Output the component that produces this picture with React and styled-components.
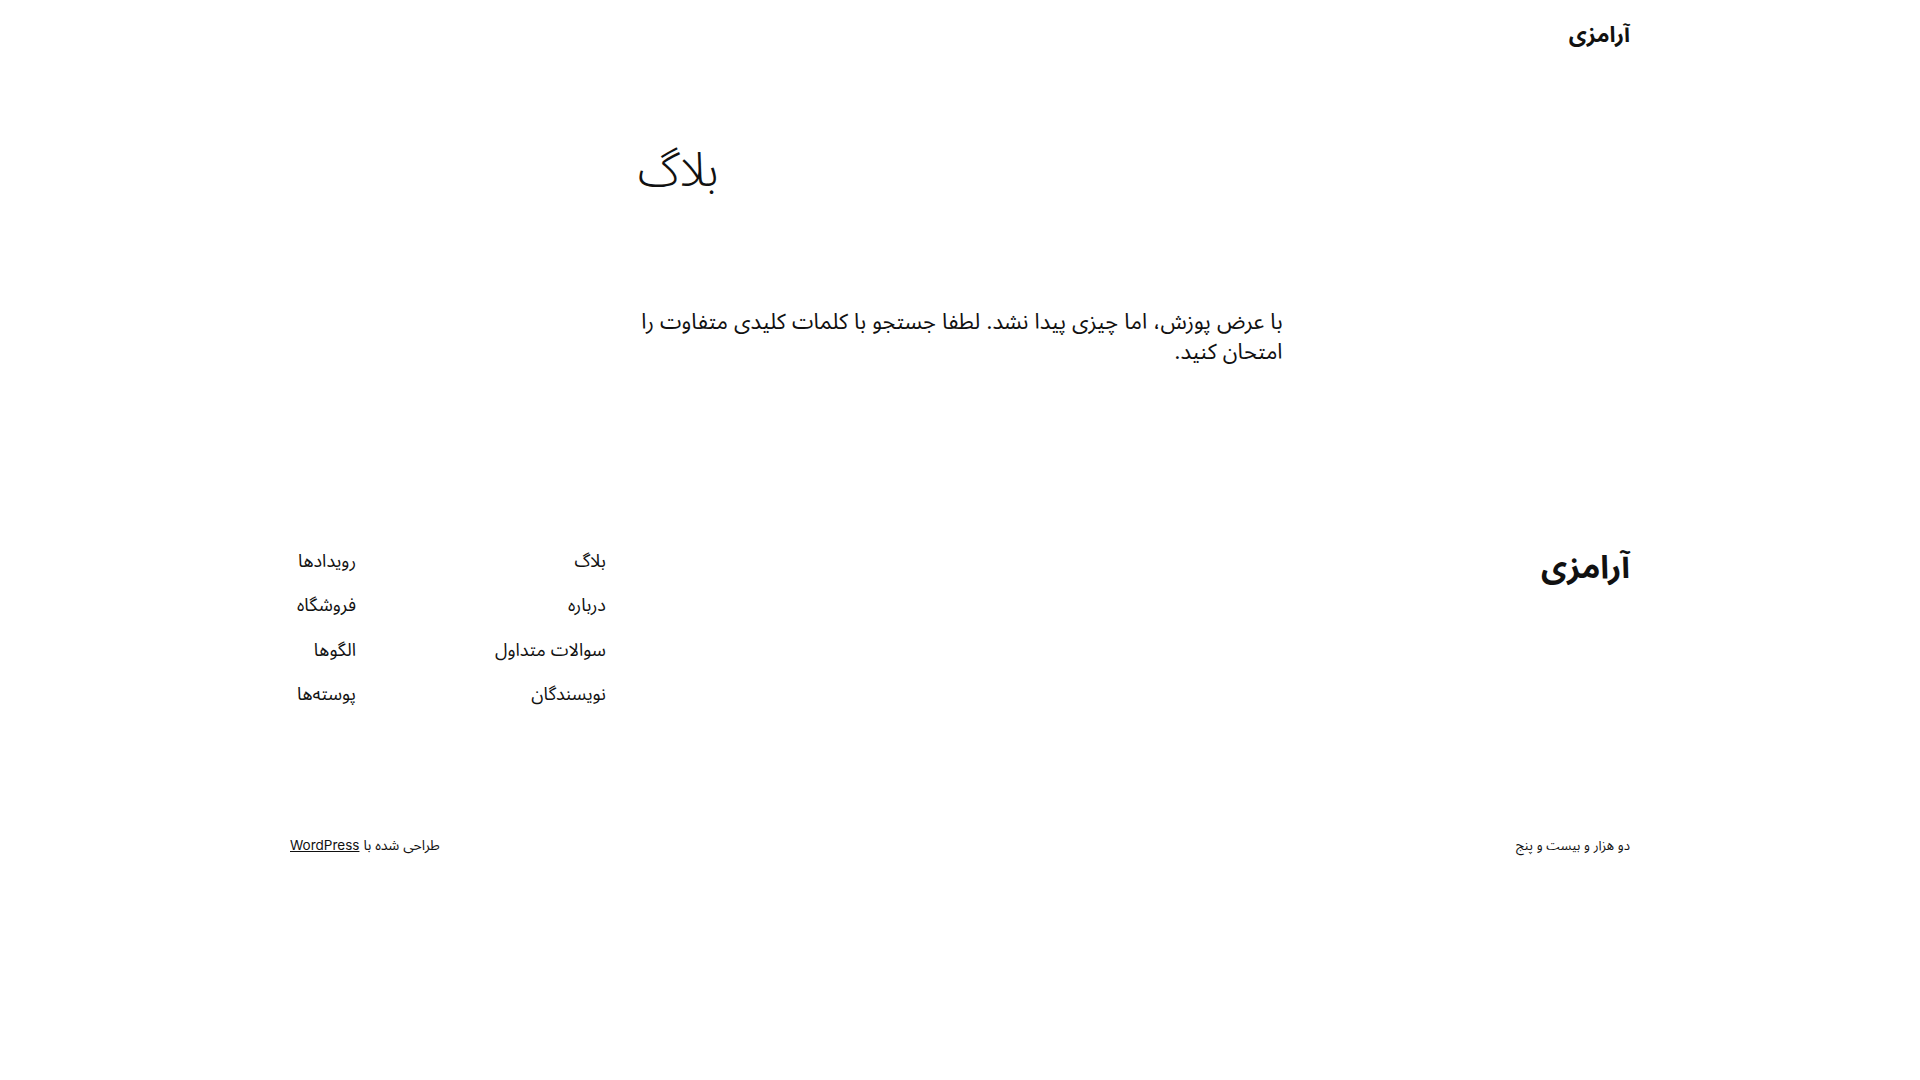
import React from "react";
import styled, { createGlobalStyle } from "styled-components";

const Global = createGlobalStyle`
  html, body { margin: 0; padding: 0; background: #ffffff; }
  body {
    font-family: Inter, "Noto Sans Arabic", "DejaVu Sans", sans-serif;
    color: #111111;
    -webkit-font-smoothing: antialiased;
  }
  a { color: inherit; }
`;

const Page = styled.div`
  direction: rtl;
  display: flex;
  flex-direction: column;
`;

const Wide = styled.div`
  width: 1340px;
  margin: 0 auto;
`;

const Header = styled(Wide)`
  display: flex;
  justify-content: space-between;
  align-items: center;
  padding: 20px 0;
`;

const SiteTitle = styled.a`
  font-size: ${(p) => (p.$big ? "32px" : "22px")};
  font-weight: 700;
  line-height: ${(p) => (p.$big ? "44px" : "28px")};
  text-decoration: none;
`;

const Main = styled.main`
  width: 645px;
  margin: 0 auto;
  padding-top: 72px;
  padding-bottom: 179px;
`;

const Heading = styled.h1`
  margin: 0;
  text-align: left;
  font-size: 48px;
  font-weight: 300;
  line-height: 58px;
`;

const Para = styled.p`
  margin: 108px 0 0;
  font-size: 21.75px;
  line-height: 30px;
`;

const Footer = styled(Wide)`
  display: flex;
  flex-direction: column;
  padding-bottom: 40px;
`;

const FooterTop = styled.div`
  display: flex;
  justify-content: space-between;
  align-items: flex-start;
  padding-bottom: 128px;
`;

const NavGroup = styled.div`
  display: flex;
  gap: 139px;
  padding-top: 3px;
`;

const NavCol = styled.nav`
  display: flex;
  flex-direction: column;
  gap: 18.4px;
  min-width: 66px;
`;

const NavLink = styled.a`
  font-size: 18px;
  line-height: 26px;
  text-decoration: none;
`;

const FooterBottom = styled.div`
  display: flex;
  justify-content: space-between;
  align-items: center;
  font-size: 14px;
  line-height: 20px;
`;

const Year = styled.span`
  font-size: 13.2px;
`;

const Credit = styled.span`
  a {
    text-decoration: underline;
    font-size: 13.5px;
  }
`;

export default function App() {
  return (
    <Page>
      <Global />
      <Header>
        <SiteTitle href="#">آرامزی</SiteTitle>
      </Header>
      <Main>
        <Heading>بلاگ</Heading>
        <Para>
          با عرض پوزش، اما چیزی پیدا نشد. لطفا جستجو با کلمات کلیدی متفاوت را امتحان کنید.
        </Para>
      </Main>
      <Footer>
        <FooterTop>
          <SiteTitle $big href="#">آرامزی</SiteTitle>
          <NavGroup>
            <NavCol>
              <NavLink href="#">بلاگ</NavLink>
              <NavLink href="#">درباره</NavLink>
              <NavLink href="#">سوالات متداول</NavLink>
              <NavLink href="#">نویسندگان</NavLink>
            </NavCol>
            <NavCol>
              <NavLink href="#">رویدادها</NavLink>
              <NavLink href="#">فروشگاه</NavLink>
              <NavLink href="#">الگوها</NavLink>
              <NavLink href="#">پوسته‌ها</NavLink>
            </NavCol>
          </NavGroup>
        </FooterTop>
        <FooterBottom>
          <Year>دو هزار و بیست و پنج</Year>
          <Credit>
            طراحی شده با <a href="#">WordPress</a>
          </Credit>
        </FooterBottom>
      </Footer>
    </Page>
  );
}
